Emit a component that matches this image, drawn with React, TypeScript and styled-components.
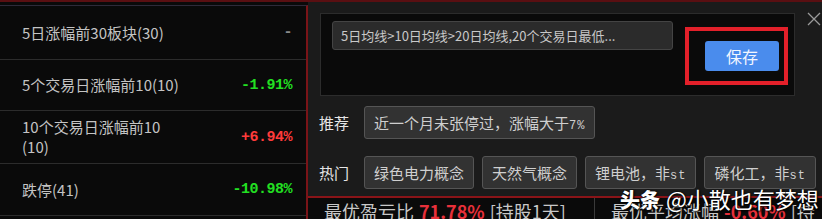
import styled, { createGlobalStyle } from "styled-components";

const GlobalStyle = createGlobalStyle`
  html, body {
    margin: 0;
    padding: 0;
    background: #0a0a0a;
    overflow: hidden;
  }
  body {
    font-family: "Noto Sans CJK SC", "Noto Sans", sans-serif;
  }
`;

const Screen = styled.div`
  width: 822px;
  height: 219px;
  display: flex;
  border-top: 2px solid #5a0f12;
  box-sizing: border-box;
  overflow: hidden;
  position: relative;
  background: #0a0a0a;
`;

const LeftPanel = styled.div`
  width: 306px;
  flex-shrink: 0;
  margin-top: 3px;
  border-top: 1px solid #2e2a3a;
  border-right: 2px solid #7a1418;
  display: flex;
  flex-direction: column;
`;

const Row = styled.div<{ $h: number }>`
  height: ${(p) => p.$h}px;
  display: flex;
  align-items: center;
  justify-content: space-between;
  padding: 0 14px 0 22px;
  border-bottom: 1px solid #2c2c2c;
  box-sizing: border-box;
  flex-shrink: 0;
`;

const RowLabel = styled.div`
  color: #c4c4c4;
  font-size: 15px;
  line-height: 20px;
  white-space: pre-line;
`;

const RowValue = styled.div<{ $tone: "up" | "down" | "none" }>`
  font-family: "Liberation Mono", "DejaVu Sans Mono", monospace;
  font-weight: bold;
  font-size: 15px;
  letter-spacing: -0.5px;
  color: ${(p) =>
    p.$tone === "up" ? "#ff3b3b" : p.$tone === "down" ? "#22e022" : "#8a8a8a"};
`;

const RightPanel = styled.div`
  flex: 1;
  display: flex;
  flex-direction: column;
  background: #1b1b1b;
  border-right: 3px solid #5a0f12;
  position: relative;
  min-height: 0;
`;

const Editor = styled.div`
  flex-shrink: 0;
  margin: 11px 36px 0 12px;
  height: 83px;
  background: #0a0a0a;
  border: 1px solid #2c2c2c;
  display: flex;
  align-items: flex-start;
  padding: 7px 0 0 11px;
  box-sizing: border-box;
  position: relative;
`;

const Condition = styled.div`
  width: 341px;
  height: 29px;
  box-sizing: border-box;
  background: #2b2b2b;
  border: 1px solid #444;
  border-radius: 3px;
  color: #c8c8c8;
  font-size: 13px;
  line-height: 27px;
  padding-left: 8px;
  white-space: nowrap;
  overflow: hidden;
`;

const Highlight = styled.div`
  position: absolute;
  left: 364px;
  top: 13px;
  width: 103px;
  height: 58px;
  box-sizing: border-box;
  border: 4px solid #e3202a;
  display: flex;
  align-items: center;
  padding-left: 16px;
`;

const SaveButton = styled.button`
  width: 74px;
  height: 30px;
  border: none;
  border-radius: 3px;
  background: #4a8ced;
  color: #f2f6ff;
  font-family: inherit;
  font-size: 16px;
  padding: 0;
`;

const Close = styled.div`
  position: absolute;
  right: 10px;
  top: 5px;
  width: 14px;
  height: 14px;
`;

const TagLine = styled.div<{ $top: number }>`
  flex-shrink: 0;
  display: flex;
  align-items: center;
  gap: 8px;
  margin: ${(p) => p.$top}px 0 0 11px;
`;

const TagTitle = styled.div`
  color: #e6e6e6;
  font-size: 15px;
  width: 37px;
`;

const Chip = styled.div`
  height: 33px;
  box-sizing: border-box;
  padding: 0 9px;
  background: #323232;
  border: 1px solid #555;
  border-radius: 3px;
  color: #cfcfcf;
  font-size: 15px;
  line-height: 31px;
  white-space: nowrap;
`;

const Small = styled.span`
  font-family: "Liberation Mono", monospace;
  font-size: 12px;
  letter-spacing: 1px;
`;

const StatsBar = styled.div`
  margin-top: 7px;
  border-top: 2px solid #8a1418;
  flex: 1;
  min-height: 0;
  display: flex;
  background: #0a0a0a;
`;

const Stat = styled.div<{ $w: number }>`
  width: ${(p) => p.$w}px;
  padding-left: 16px;
  color: #c8c8c8;
  font-size: 18px;
  line-height: 24px;
  padding-top: 1px;
  white-space: nowrap;
  overflow: hidden;
  & + & {
    border-left: 1px solid #3a3a3a;
  }
`;

const StatNum = styled.span`
  color: #e8303a;
  font-weight: bold;
  margin: 0 5px;
`;

const Watermark = styled.div`
  position: absolute;
  left: 620px;
  top: 181px;
  color: #ffffff;
  font-size: 22px;
  line-height: 30px;
  white-space: nowrap;
  text-shadow: 0 0 2px #000, 1px 1px 2px #000;
  & b {
    font-weight: 900;
    font-size: 20px;
    margin-right: 6px;
  }
`;

const rows: { label: string; value: string; tone: "up" | "down" | "none"; h: number }[] = [
  { label: "5日涨幅前30板块(30)", value: "-", tone: "none", h: 54 },
  { label: "5个交易日涨幅前10(10)", value: "-1.91%", tone: "down", h: 51 },
  { label: "10个交易日涨幅前10\n(10)", value: "+6.94%", tone: "up", h: 53 },
  { label: "跌停(41)", value: "-10.98%", tone: "down", h: 52 },
];

export default function App() {
  return (
    <>
      <GlobalStyle />
      <Screen>
        <LeftPanel>
          {rows.map((r) => (
            <Row key={r.label} $h={r.h}>
              <RowLabel>{r.label}</RowLabel>
              <RowValue $tone={r.tone}>{r.value}</RowValue>
            </Row>
          ))}
        </LeftPanel>
        <RightPanel>
          <Close>
            <svg width="14" height="14" viewBox="0 0 14 14">
              <path d="M1 1L13 13M13 1L1 13" stroke="#9a9a9a" strokeWidth="1.3" />
            </svg>
          </Close>
          <Editor>
            <Condition>5日均线&gt;10日均线&gt;20日均线,20个交易日最低...</Condition>
            <Highlight>
              <SaveButton>保存</SaveButton>
            </Highlight>
          </Editor>
          <TagLine $top={10}>
            <TagTitle>推荐</TagTitle>
            <Chip>
              近一个月未张停过，涨幅大于<Small>7%</Small>
            </Chip>
          </TagLine>
          <TagLine $top={17}>
            <TagTitle>热门</TagTitle>
            <Chip>绿色电力概念</Chip>
            <Chip>天然气概念</Chip>
            <Chip>
              锂电池，非<Small>st</Small>
            </Chip>
            <Chip>
              磷化工，非<Small>st</Small>
            </Chip>
          </TagLine>
          <StatsBar>
            <Stat $w={270}>
              最优盈亏比<StatNum>71.78%</StatNum>[持股1天]
            </Stat>
            <Stat $w={220}>
              最优平均涨幅<StatNum>-0.60%</StatNum>[持
            </Stat>
          </StatsBar>
        </RightPanel>
        <Watermark>
          <b>头条</b>@小散也有梦想
        </Watermark>
      </Screen>
    </>
  );
}
